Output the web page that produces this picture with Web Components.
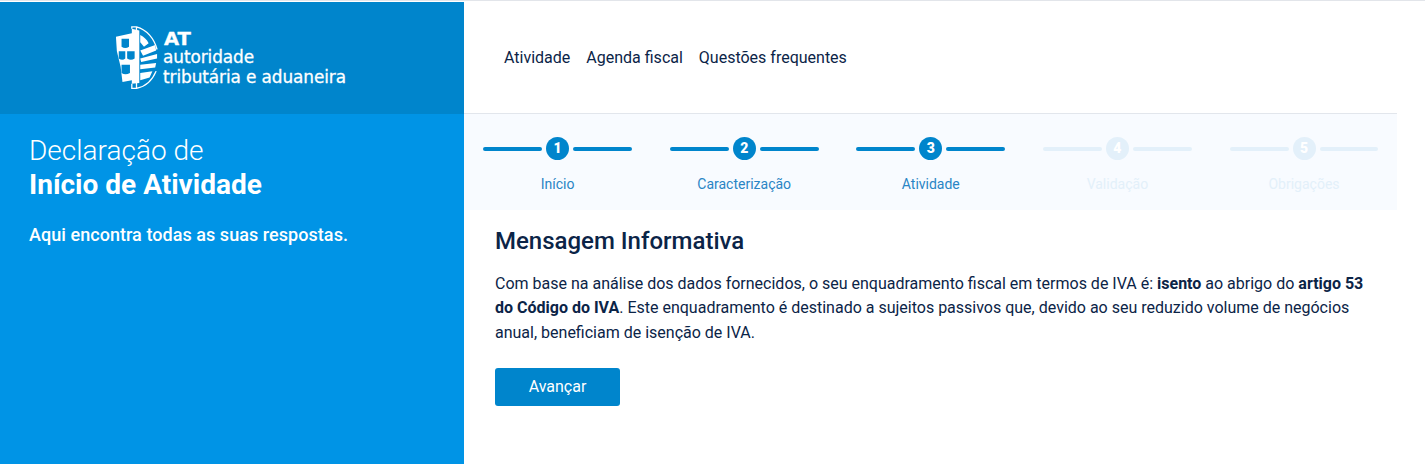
<!DOCTYPE html>
<html lang="pt">
<head>
<meta charset="utf-8">
<title>Declaração de Início de Atividade</title>
<style>
html, body { margin: 0; padding: 0; height: 100%; background: #fff; }
body { font-family: Roboto, "Liberation Sans", sans-serif; color: #0b2447; overflow: hidden; }
</style>
</head>
<body>
<at-app>
  <at-sidebar slot="side"></at-sidebar>
  <at-nav slot="main">
    <a href="#">Atividade</a>
    <a href="#">Agenda fiscal</a>
    <a href="#">Questões frequentes</a>
  </at-nav>
  <at-stepper slot="main">
    <at-step n="1" label="Início"></at-step>
    <at-step n="2" label="Caracterização"></at-step>
    <at-step n="3" label="Atividade"></at-step>
    <at-step n="4" label="Validação" disabled></at-step>
    <at-step n="5" label="Obrigações" disabled></at-step>
  </at-stepper>
  <at-message slot="main" heading="Mensagem Informativa" action="Avançar">
    Com base na análise dos dados fornecidos, o seu enquadramento fiscal em termos de IVA é: <b>isento</b> ao abrigo do <b>artigo 53 do Código do IVA</b>. Este enquadramento é destinado a sujeitos passivos que, devido ao seu reduzido volume de negócios anual, beneficiam de isenção de IVA.
  </at-message>
</at-app>

<script>
class AtApp extends HTMLElement {
  constructor() {
    super();
    this.attachShadow({ mode: 'open' });
    this.shadowRoot.innerHTML = `
      <style>
        :host { display: block; height: 464px; box-sizing: border-box; border-top: 1px solid #e2e5ea; padding-top: 1px; }
        .wrap { display: flex; height: 100%; }
        .side { flex: 0 0 464px; }
        .main { flex: 0 0 933px; }
      </style>
      <div class="wrap">
        <div class="side"><slot name="side"></slot></div>
        <div class="main"><slot name="main"></slot></div>
      </div>`;
  }
}

class AtSidebar extends HTMLElement {
  constructor() {
    super();
    this.attachShadow({ mode: 'open' });
    this.shadowRoot.innerHTML = `
      <style>
        :host { display: flex; flex-direction: column; height: 462px; background: #0094e6; color: #fff; }
        .brand { height: 112px; background: #0085cc; display: flex; justify-content: center; align-items: center; gap: 5px; padding-right: 3px; box-sizing: border-box; }
        .brand svg { display: block; margin-top: 1px; }
        .logo-text { font-family: "DejaVu Sans", sans-serif; -webkit-text-stroke: .3px #fff; font-size: 16.9px; line-height: 20px; margin-top: 2px; white-space: nowrap; }
        .logo-text strong { display: block; font-size: 17px; font-weight: 700; line-height: 15px; margin-left: 1px; transform: scaleX(1.15); transform-origin: left; }
        .logo-text span { display: block; letter-spacing: -.1px; }
        .text { padding: 20px 29px; }
        h1 { margin: 0; font-size: 28px; line-height: 34px; font-weight: 300; }
        h1 b { display: block; font-weight: 700; }
        p { margin: 21px 0 0; font-size: 18px; line-height: 24px; font-weight: 500; letter-spacing: .05px; }
      </style>
      <div class="brand">
        <svg width="43" height="65" viewBox="0 0 46 72" preserveAspectRatio="none" fill="none">
          <path fill="#fff" d="M1 12 L18 8 V3 L26 5 V63 L18 64 V60 L8 62 L6 45 L2 28 Z"/>
          <path fill="#0085cc" d="M7 14h8v9q-4 3-8 0zM4 28h7v8q-3 3-7 0zM13 28h8v8q-4 3-8 0zM7 43h9v9q-5 3-9 0z"/>
          <path stroke="#fff" stroke-width="1.4" d="M18 3 V1 H23 C34 4 42 14 45 26 M23 1 V8 M18 64 V69 H23 C34 67 40 60 44 50 M23 69 V63"/>
          <path fill="#fff" d="M27 10 C31 12 34 15 36 19 L31 23 L27 18 Z M27 27 L43 21 L44 27 L30 33 Z M27 36 L45 31 L45 36 L28 40 Z M27 43 L44 41 L43 46 L27 48 Z M27 52 L40 50 L37 57 L27 60 Z"/>
        </svg>
        <div class="logo-text"><strong>AT</strong><span>autoridade</span><span>tributária e aduaneira</span></div>
      </div>
      <div class="text">
        <h1>Declaração de<b>Início de Atividade</b></h1>
        <p>Aqui encontra todas as suas respostas.</p>
      </div>`;
  }
}

class AtNav extends HTMLElement {
  constructor() {
    super();
    this.attachShadow({ mode: 'open' });
    this.shadowRoot.innerHTML = `
      <style>
        :host { display: flex; align-items: center; gap: 16px; height: 112px; box-sizing: border-box; padding: 0 0 0 40px; border-bottom: 1px solid #e2e6ec; font-size: 16px; }
        ::slotted(a) { color: #0b2447; text-decoration: none; }
      </style>
      <slot></slot>`;
  }
}

class AtStepper extends HTMLElement {
  constructor() {
    super();
    this.attachShadow({ mode: 'open' });
    this.shadowRoot.innerHTML = `
      <style>
        :host { display: grid; grid-template-columns: repeat(5, 1fr); height: 96px; background: #f8fbff; }
      </style>
      <slot></slot>`;
  }
}

class AtStep extends HTMLElement {
  constructor() {
    super();
    this.attachShadow({ mode: 'open' });
    this.shadowRoot.innerHTML = `
      <style>
        :host { display: block; --c: #0085cc; --t: #2a85c5; padding: 23px 18.7px 0 19.3px; text-align: center; font-size: 14px; }
        :host([disabled]) { --c: #e3f0fa; --t: #e3f0fa; }
        .track { display: flex; align-items: center; gap: 4px; height: 23px; }
        .line { flex: 1; height: 4px; border-radius: 2px; background: var(--c); }
        .dot { flex: 0 0 23px; height: 23px; border-radius: 50%; background: var(--c); color: #fff; font-size: 14px; line-height: 23px; font-weight: 900; }
        .label { margin-top: 15px; line-height: 18px; color: var(--t); }
      </style>
      <div class="track"><span class="line"></span><span class="dot"></span><span class="line"></span></div>
      <div class="label"></div>`;
  }
  connectedCallback() {
    this.shadowRoot.querySelector('.dot').textContent = this.getAttribute('n');
    this.shadowRoot.querySelector('.label').textContent = this.getAttribute('label');
  }
}

class AtMessage extends HTMLElement {
  constructor() {
    super();
    this.attachShadow({ mode: 'open' });
    this.shadowRoot.innerHTML = `
      <style>
        :host { display: block; padding: 17px 31px 0; }
        h2 { margin: 0; font-size: 24px; line-height: 28px; font-weight: 500; color: #0b2447; }
        .body { margin-top: 17px; font-size: 16px; line-height: 24.3px; color: #0b2447; }
        button { display: block; margin-top: 23px; width: 125px; height: 38px; border: 0; border-radius: 3px; background: #0085cc; color: #fff; font: 400 16px Roboto, sans-serif; }
      </style>
      <h2></h2>
      <div class="body"><slot></slot></div>
      <button type="button"></button>`;
  }
  connectedCallback() {
    this.shadowRoot.querySelector('h2').textContent = this.getAttribute('heading');
    this.shadowRoot.querySelector('button').textContent = this.getAttribute('action');
  }
}

customElements.define('at-app', AtApp);
customElements.define('at-sidebar', AtSidebar);
customElements.define('at-nav', AtNav);
customElements.define('at-stepper', AtStepper);
customElements.define('at-step', AtStep);
customElements.define('at-message', AtMessage);
</script>
</body>
</html>
